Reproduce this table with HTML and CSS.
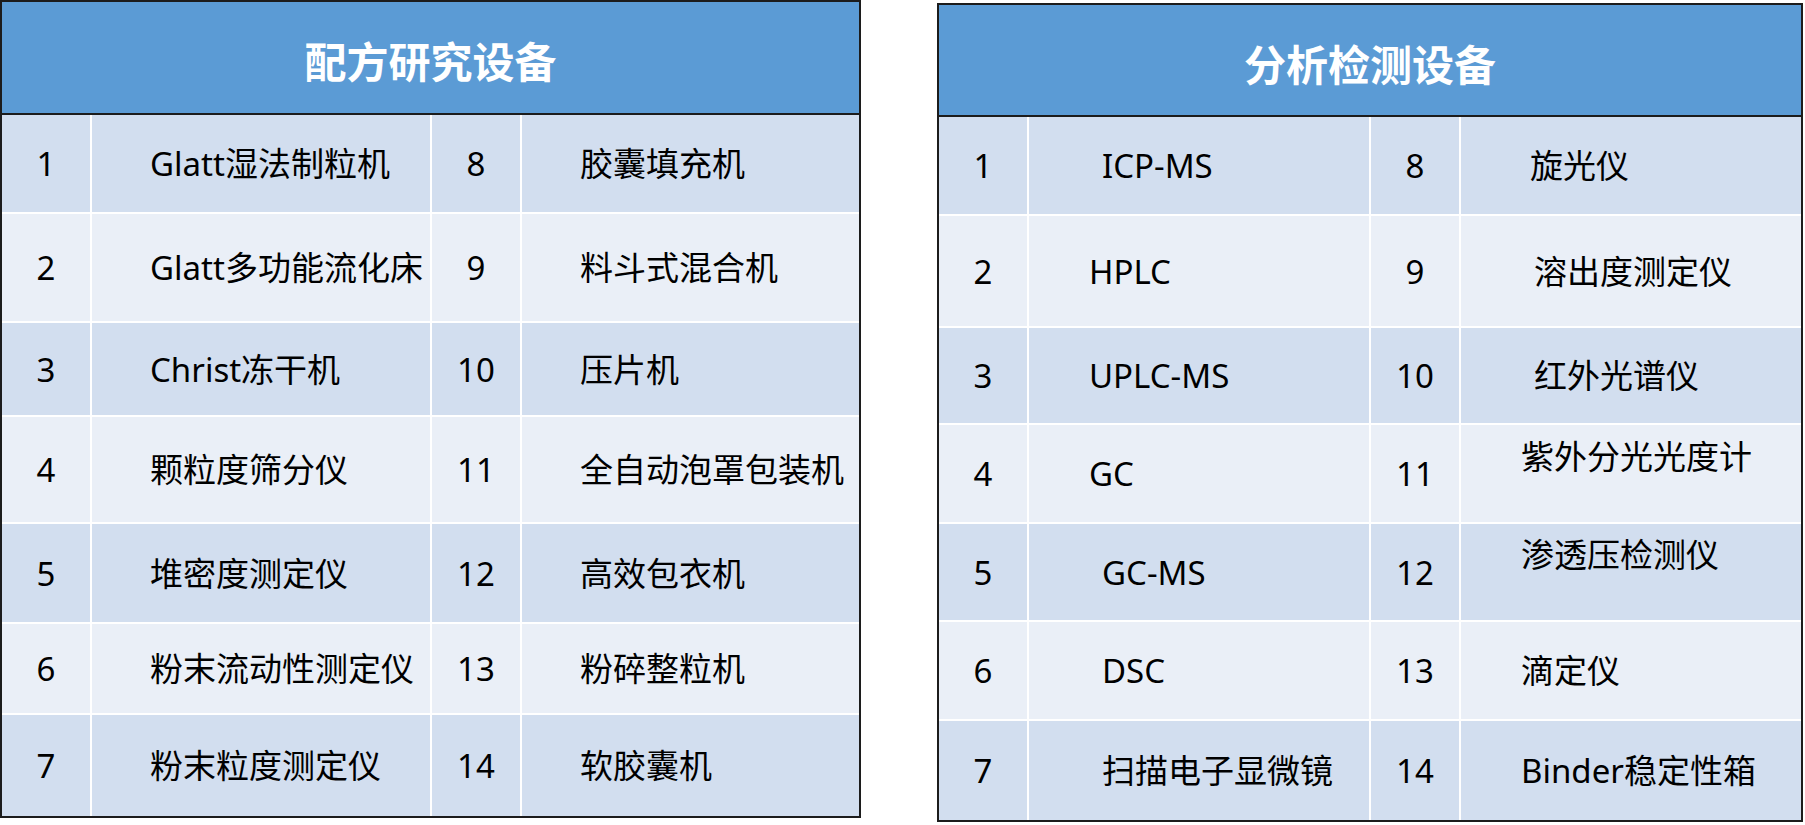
FILE: index.html
```html
<!DOCTYPE html>
<html lang="zh">
<head>
<meta charset="utf-8">
<title>设备</title>
<link rel="stylesheet" href="styles.css">
</head>
<body>
<main class="page">
  <section class="tbl tbl-left">
    <header class="tbl-head">配方研究设备</header>
    <div class="tbl-body rows-left">
      <div class="c num odd">1</div><div class="c name odd">Glatt湿法制粒机</div><div class="c num odd">8</div><div class="c name odd">胶囊填充机</div>
      <div class="c num even">2</div><div class="c name even">Glatt多功能流化床</div><div class="c num even">9</div><div class="c name even">料斗式混合机</div>
      <div class="c num odd">3</div><div class="c name odd">Christ冻干机</div><div class="c num odd">10</div><div class="c name odd">压片机</div>
      <div class="c num even">4</div><div class="c name even">颗粒度筛分仪</div><div class="c num even">11</div><div class="c name even">全自动泡罩包装机</div>
      <div class="c num odd">5</div><div class="c name odd">堆密度测定仪</div><div class="c num odd">12</div><div class="c name odd">高效包衣机</div>
      <div class="c num even">6</div><div class="c name even">粉末流动性测定仪</div><div class="c num even">13</div><div class="c name even">粉碎整粒机</div>
      <div class="c num odd">7</div><div class="c name odd">粉末粒度测定仪</div><div class="c num odd">14</div><div class="c name odd">软胶囊机</div>
    </div>
  </section>
  <section class="tbl tbl-right">
    <header class="tbl-head">分析检测设备</header>
    <div class="tbl-body rows-right">
      <div class="c num odd">1</div><div class="c name odd ind-wide">ICP-MS</div><div class="c num odd">8</div><div class="c name odd ind-mid">旋光仪</div>
      <div class="c num even">2</div><div class="c name even">HPLC</div><div class="c num even">9</div><div class="c name even ind-wide">溶出度测定仪</div>
      <div class="c num odd">3</div><div class="c name odd">UPLC-MS</div><div class="c num odd">10</div><div class="c name odd ind-wide">红外光谱仪</div>
      <div class="c num even">4</div><div class="c name even">GC</div><div class="c num even">11</div><div class="c name even raised">紫外分光光度计</div>
      <div class="c num odd">5</div><div class="c name odd ind-wide">GC-MS</div><div class="c num odd">12</div><div class="c name odd raised">渗透压检测仪</div>
      <div class="c num even">6</div><div class="c name even ind-wide">DSC</div><div class="c num even">13</div><div class="c name even">滴定仪</div>
      <div class="c num odd">7</div><div class="c name odd ind-wide">扫描电子显微镜</div><div class="c num odd">14</div><div class="c name odd">Binder稳定性箱</div>
    </div>
  </section>
</main>
</body>
</html>
```

FILE: styles.css
```css
html, body {
  margin: 0;
  padding: 0;
  background: #ffffff;
}

.page {
  display: flex;
  align-items: flex-start;
  gap: 76px;
  width: 1805px;
  height: 825px;
  font-family: "Noto Sans", "Noto Sans CJK SC", sans-serif;
  color: #000000;
}

.tbl {
  border: 2px solid #1c1c1c;
  background: #ffffff;
  display: flex;
  flex-direction: column;
}

.tbl-left {
  width: 857px;
}

.tbl-right {
  width: 862px;
  margin-top: 3px;
}

.tbl-head {
  background: #5b9bd5;
  color: #ffffff;
  font-family: "Noto Sans CJK SC", "Noto Sans", sans-serif;
  font-weight: 700;
  font-size: 42px;
  display: flex;
  align-items: center;
  justify-content: center;
  border-bottom: 2px solid #1c1c1c;
  padding-top: 4px;
  box-sizing: border-box;
}

.tbl-left .tbl-head {
  height: 113px;
}

.tbl-right .tbl-head {
  height: 112px;
}

.tbl-body {
  display: grid;
  gap: 2px;
  background: #ffffff;
}

.rows-left {
  grid-template-columns: 88px 338px 88px 337px;
  grid-template-rows: 97px 107px 92px 105px 98px 89px 101px;
}

.rows-right {
  grid-template-columns: 88px 340px 88px 340px;
  grid-template-rows: 97px 110px 95px 97px 96px 97px 99px;
}

.c {
  display: flex;
  align-items: center;
  font-size: 33px;
  line-height: 1;
  white-space: nowrap;
  overflow: hidden;
}

.odd {
  background: #d2deef;
}

.even {
  background: #eaeff7;
}

.num {
  justify-content: center;
}

.name {
  padding-left: 58px;
}

.tbl-right .name {
  padding-left: 60px;
}

.tbl-right .name.ind-wide {
  padding-left: 73px;
}

.tbl-right .name.ind-mid {
  padding-left: 69px;
}

.tbl-right .name.raised {
  padding-bottom: 35px;
}
```
